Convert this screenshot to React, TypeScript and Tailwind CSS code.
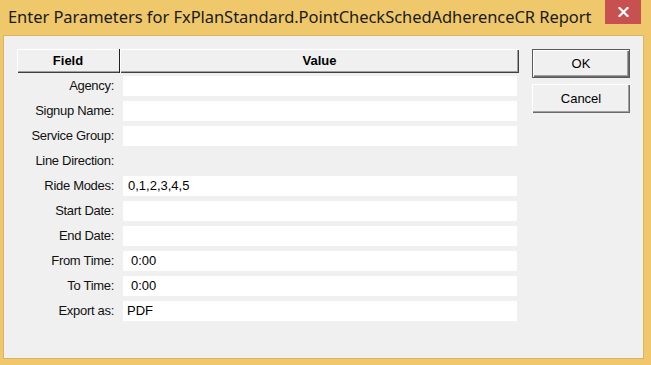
export default function App() {
  const rows: { label: string; value?: string; pad?: string }[] = [
    { label: "Agency:", value: "" },
    { label: "Signup Name:", value: "" },
    { label: "Service Group:", value: "" },
    { label: "Line Direction:" },
    { label: "Ride Modes:", value: "0,1,2,3,4,5", pad: "pl-[5px]" },
    { label: "Start Date:", value: "" },
    { label: "End Date:", value: "" },
    { label: "From Time:", value: "0:00", pad: "pl-[8px]" },
    { label: "To Time:", value: "0:00", pad: "pl-[8px]" },
    { label: "Export as:", value: "PDF", pad: "pl-[4px]" },
  ];
  return (
    <div className="w-[651px] h-[365px] bg-[#f0c86c] flex flex-col overflow-hidden font-['Liberation_Sans',Arial,sans-serif] text-black">
      <div className="h-[35px] flex items-start shrink-0">
        <div className="pl-[8px] pt-[5px] text-[16.5px] tracking-[-0.05px] leading-[24px] text-[#1a1a1a] font-['Noto_Sans',sans-serif] whitespace-nowrap">
          Enter Parameters for FxPlanStandard.PointCheckSchedAdherenceCR Report
        </div>
        <div className="ml-auto mr-[10px] w-[36px] h-[24px] bg-[#c75050] flex items-center justify-center shrink-0">
          <svg width="11" height="10" viewBox="0 0 11 10">
            <path d="M1.5 1 L9.5 9 M9.5 1 L1.5 9" stroke="#fff" strokeWidth="2.2" strokeLinecap="square" />
          </svg>
        </div>
      </div>
      <div className="flex-1 ml-[3px] mr-[7px] mb-[6px] bg-[#f0f0f0] border border-[#dcb460] flex pl-[13px] pt-[13px]">
        <div className="w-[502px] flex flex-col">
          <div className="h-[24px] flex text-[13px] font-bold">
            <div className="w-[103px] flex items-center justify-center border-r border-[#202020] shadow-[inset_1px_1px_0_#ffffff,inset_0_-1px_0_#404040,inset_0_-2px_0_#a0a0a0]">
              Field
            </div>
            <div className="flex-1 flex items-center justify-center shadow-[inset_1px_1px_0_#ffffff,inset_-1px_-1px_0_#404040,inset_-2px_-2px_0_#a0a0a0]">
              Value
            </div>
          </div>
          <div className="mt-[3px] flex flex-col gap-[5px] text-[13px]">
            {rows.map((r) => (
              <div key={r.label} className="h-[20px] flex items-center">
                <div className="w-[106px] pr-[9px] text-right text-[#111] whitespace-nowrap tracking-[-0.3px]">{r.label}</div>
                {r.value !== undefined && (
                  <div className={`w-[394px] h-[20px] bg-white flex items-center ${r.pad ?? "pl-[5px]"}`}>
                    {r.value}
                  </div>
                )}
              </div>
            ))}
          </div>
        </div>
        <div className="ml-[13px] flex flex-col gap-[6px] text-[13px]">
          <div className="w-[98px] h-[29px] flex items-center justify-center border border-[#5a5a5a] shadow-[inset_1px_1px_0_#ffffff,inset_-1px_-1px_0_#696969,inset_-2px_-2px_0_#a0a0a0]">
            OK
          </div>
          <div className="w-[98px] h-[29px] flex items-center justify-center shadow-[inset_1px_1px_0_#ffffff,inset_-1px_-1px_0_#696969,inset_-2px_-2px_0_#a0a0a0]">
            Cancel
          </div>
        </div>
      </div>
    </div>
  );
}
